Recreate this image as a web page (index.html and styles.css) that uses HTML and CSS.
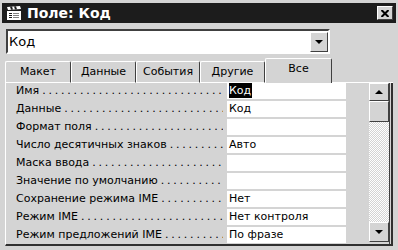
FILE: index.html
```html
<!DOCTYPE html>
<html>
	<head>
		<title>Поле: Код</title>
		<link rel="stylesheet" href="styles.css">
	</head>

	<body>
		<div class="window">
			<div class="titleBar">
				<svg class="titleIcon" width="16" height="14" viewBox="0 0 16 14">
					<rect x="1" y="5" width="14" height="9" fill="#ffffff"/>
					<polygon points="1,1 14,0 15,3 2,4" fill="#ffffff"/>
					<polygon points="4,0.8 6,0.6 7,3.5 5,3.7" fill="#1c1c1c"/>
					<polygon points="8,0.5 10,0.3 11,3.3 9,3.4" fill="#1c1c1c"/>
					<rect x="3" y="7" width="3" height="1" fill="#1c1c1c"/>
					<rect x="7" y="7" width="6" height="1" fill="#808080"/>
					<rect x="3" y="9" width="3" height="1" fill="#1c1c1c"/>
					<rect x="7" y="9" width="6" height="1" fill="#808080"/>
					<rect x="3" y="11" width="3" height="1" fill="#1c1c1c"/>
					<rect x="7" y="11" width="6" height="1" fill="#808080"/>
				</svg>
				<span class="titleText">Поле: Код</span>
				<div class="closeButton">
					<svg width="8" height="7" viewBox="0 0 8 7">
						<path d="M0.5 0 L7.5 7 M7.5 0 L0.5 7" stroke="#000" stroke-width="2"/>
					</svg>
				</div>
			</div>

			<div class="combo">
				<span class="comboText">Код</span>
				<div class="comboButton"><div class="arrowDown"></div></div>
			</div>

			<div class="tabs">
				<div class="tab" style="width: 66px;">Макет</div>
				<div class="tab" style="width: 65px;">Данные</div>
				<div class="tab" style="width: 64px;">События</div>
				<div class="tab" style="width: 65px;">Другие</div>
				<div class="tab activeTab" style="width: 67px;">Все</div>
				<div class="tabFiller"></div>
			</div>

			<div class="panel">
				<div class="list">
					<div class="row">
						<div class="name"><span>Имя</span><span class="leader"></span></div>
						<div class="val"><span class="selected">Код</span></div>
					</div>
					<div class="row">
						<div class="name"><span>Данные</span><span class="leader"></span></div>
						<div class="val">Код</div>
					</div>
					<div class="row">
						<div class="name"><span>Формат поля</span><span class="leader"></span></div>
						<div class="val"></div>
					</div>
					<div class="row">
						<div class="name"><span>Число десятичных знаков</span><span class="leader"></span></div>
						<div class="val">Авто</div>
					</div>
					<div class="row">
						<div class="name"><span>Маска ввода</span><span class="leader"></span></div>
						<div class="val"></div>
					</div>
					<div class="row">
						<div class="name"><span>Значение по умолчанию</span><span class="leader"></span></div>
						<div class="val"></div>
					</div>
					<div class="row">
						<div class="name"><span>Сохранение режима IME</span><span class="leader"></span></div>
						<div class="val">Нет</div>
					</div>
					<div class="row">
						<div class="name"><span>Режим IME</span><span class="leader"></span></div>
						<div class="val">Нет контроля</div>
					</div>
					<div class="row">
						<div class="name"><span>Режим предложений IME</span><span class="leader"></span></div>
						<div class="val">По фразе</div>
					</div>
				</div>

				<div class="scrollBar">
					<div class="scrollButton upButton"><div class="arrowUp"></div></div>
					<div class="scrollThumb"></div>
					<div class="scrollTrack"></div>
					<div class="scrollButton downButton"><div class="arrowDown"></div></div>
				</div>
			</div>
		</div>
	</body>
</html>
```

FILE: styles.css
```css
body
{
	margin: 0;
	background-color: #d4d4d4;
	font-family: "DejaVu Sans", sans-serif;
	font-size: 11px;
	color: #000000;
}

.window
{
	width: 398px;
	height: 250px;
	box-sizing: border-box;
	padding: 3px 2px 0 2px;
	overflow: hidden;
}

.titleBar
{
	height: 20px;
	display: flex;
	align-items: center;
	padding: 0 3px 0 4px;
	background-color: #1c1c1c;
	color: #ffffff;
	font-size: 14px;
	font-weight: bold;
}

.titleIcon
{
	flex-shrink: 0;
}

.titleText
{
	margin-left: 5px;
}

.closeButton
{
	margin-left: auto;
	width: 16px;
	height: 14px;
	box-sizing: border-box;
	display: flex;
	align-items: center;
	justify-content: center;
	background-color: #d4d4d4;
	border-top: 1px solid #ffffff;
	border-left: 1px solid #ffffff;
	border-right: 1px solid #404040;
	border-bottom: 1px solid #404040;
}

.combo
{
	width: 324px;
	height: 25px;
	box-sizing: border-box;
	margin: 6px 0 0 4px;
	display: flex;
	align-items: center;
	background-color: #ffffff;
	border-top: 2px solid #404040;
	border-left: 2px solid #404040;
	border-right: 2px solid #ffffff;
	border-bottom: 2px solid #ffffff;
}

.comboText
{
	font-size: 13px;
	padding-left: 1px;
}

.comboButton
{
	margin-left: auto;
	width: 18px;
	height: 20px;
	box-sizing: border-box;
	display: flex;
	align-items: center;
	justify-content: center;
	background-color: #d4d4d4;
	border-top: 1px solid #ffffff;
	border-left: 1px solid #ffffff;
	border-right: 1px solid #404040;
	border-bottom: 1px solid #404040;
}

.arrowDown
{
	width: 0;
	height: 0;
	border-left: 4px solid transparent;
	border-right: 4px solid transparent;
	border-top: 4px solid #000000;
}

.arrowUp
{
	width: 0;
	height: 0;
	border-left: 4px solid transparent;
	border-right: 4px solid transparent;
	border-bottom: 4px solid #000000;
}

.tabs
{
	height: 25px;
	margin: 4px 0 0 3px;
	width: 388px;
	display: flex;
	align-items: flex-end;
}

.tab
{
	height: 22px;
	box-sizing: border-box;
	text-align: center;
	line-height: 20px;
	border-top: 1px solid #ffffff;
	border-left: 1px solid #ffffff;
	border-right: 1px solid #404040;
	border-bottom: 1px solid #ffffff;
	border-radius: 2px 2px 0 0;
}

.activeTab
{
	height: 25px;
	line-height: 20px;
	border-bottom: none;
}

.tabFiller
{
	flex: 1;
	height: 1px;
	background-color: #ffffff;
}

.panel
{
	width: 388px;
	height: 163px;
	box-sizing: border-box;
	margin-left: 3px;
	display: flex;
	border-left: 1px solid #ffffff;
	border-right: 2px solid #303030;
	border-bottom: 2px solid #303030;
	padding-right: 1px;
}

.list
{
	flex: 1;
}

.row
{
	height: 18px;
	display: flex;
}

.name
{
	width: 221px;
	height: 16px;
	line-height: 16px;
	padding-left: 10px;
	padding-right: 4px;
	box-sizing: border-box;
	display: flex;
	white-space: nowrap;
	overflow: hidden;
}

.leader
{
	flex: 1;
	overflow: hidden;
	padding-left: 3px;
	letter-spacing: -0.35px;
}

.leader::after
{
	content: ". . . . . . . . . . . . . . . . . . . . . . . . . . . . . . . .";
}

.val
{
	width: 119px;
	height: 16px;
	line-height: 16px;
	padding-left: 2px;
	box-sizing: border-box;
	background-color: #ffffff;
	white-space: nowrap;
}

.selected
{
	background-color: #000000;
	color: #ffffff;
	padding: 1px 1px 1px 0;
}

.scrollBar
{
	width: 20px;
	display: flex;
	flex-direction: column;
	padding-bottom: 2px;
	border-right: 1px solid #404040;
}

.scrollButton,
.scrollThumb
{
	box-sizing: border-box;
	display: flex;
	align-items: center;
	justify-content: center;
	background-color: #d4d4d4;
	border-top: 1px solid #ffffff;
	border-left: 1px solid #ffffff;
	border-right: 1px solid #404040;
	border-bottom: 1px solid #404040;
}

.upButton
{
	height: 18px;
}

.scrollThumb
{
	height: 21px;
}

.downButton
{
	height: 20px;
}

.scrollTrack
{
	flex: 1;
	background: conic-gradient(#ffffff 25%, #d4d4d4 0 50%, #ffffff 0 75%, #d4d4d4 0) 0 0 / 2px 2px;
}
```
